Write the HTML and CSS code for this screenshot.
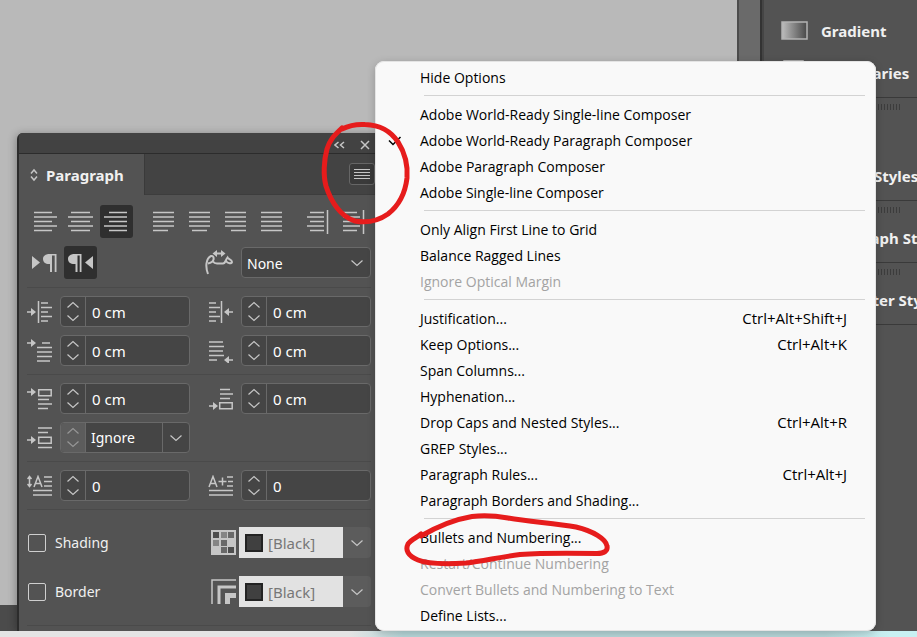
FILE: index.html
```html
<!DOCTYPE html>
<html lang="en">
<head>
    <meta charset="UTF-8">
    <meta name="viewport" content="width=device-width, initial-scale=1.0">
    <title>Paragraph Panel</title>
    <link rel="stylesheet" href="styles.css">
</head>
<body>
    <!-- Shared icons -->
    <svg class="symbols" aria-hidden="true">
        <symbol id="up" viewBox="0 0 14 8"><path d="M1.5 6.5 7 1.5l5.5 5"/></symbol>
        <symbol id="down" viewBox="0 0 14 8"><path d="M1.5 1.5 7 6.5l5.5-5"/></symbol>
    </svg>

    <!-- Workspace -->
    <div class="workspace">
        <main class="canvas">
            <div class="page-area"></div>
            <div class="status-bar"></div>
        </main>
        <div class="scroll-track"></div>
        <aside class="dock">
            <div class="dock-group first">
                <a class="dock-item" href="#">
                    <svg width="27" height="20" viewBox="0 0 27 20">
                        <defs><linearGradient id="grad"><stop offset="0" stop-color="#bdbdbd"/><stop offset="1" stop-color="#484848"/></linearGradient></defs>
                        <rect x="1" y="1" width="25" height="17" fill="url(#grad)" stroke="#b4b4b4" stroke-width="1.5"/>
                    </svg>
                    Gradient
                </a>
                <a class="dock-item" href="#">
                    <svg width="27" height="26" viewBox="0 0 27 26"><path d="M3 1h19v24H3z" fill="#8c8c8c"/></svg>
                    CC Libraries
                </a>
            </div>
            <div class="dock-group tall">
                <div class="grip"></div>
                <a class="dock-item" href="#"><span class="dock-icon"></span>Object Styles</a>
            </div>
            <div class="dock-group">
                <div class="grip"></div>
                <a class="dock-item" href="#"><span class="dock-icon"></span>Paragraph Styles</a>
            </div>
            <div class="dock-group">
                <div class="grip"></div>
                <a class="dock-item" href="#"><span class="dock-icon"></span>Character Styles</a>
            </div>
        </aside>
    </div>
    <div class="desktop"></div>

    <!-- Paragraph panel -->
    <section class="panel">
        <div class="panel-title">
            <button aria-label="Collapse"><svg width="11" height="8" viewBox="0 0 11 8"><path d="M4.5 1 1 4l3.500 3M10 1 6.500 4 10 7"/></svg></button>
            <button aria-label="Close"><svg width="10" height="10" viewBox="0 0 10 10"><path d="m1 1 8 8M9 1 1 9"/></svg></button>
        </div>
        <div class="tabs">
            <button class="tab"><svg width="8" height="14" viewBox="0 0 8 14"><path d="M1 5.500 4 2l3 3.500M1 8.500 4 12l3-3.500"/></svg>Paragraph</button>
            <button class="flyout" aria-label="Panel menu"><svg width="16" height="12" viewBox="0 0 16 12"><path d="M0 1.500h16M0 4.500h16M0 7.500h16M0 10.500h16"/></svg></button>
        </div>

        <div class="panel-body">
            <div class="align-row">
                <div class="group">
                    <button class="tool" aria-label="Align left"><svg width="25" height="22" viewBox="0 0 25 22"><path d="M2 1.500h18M2 6h23M2 10.500h18M2 15h23M2 19.500h18"/></svg></button>
                    <button class="tool" aria-label="Align center"><svg width="25" height="22" viewBox="0 0 25 22"><path d="M3 1.500h19M0 6h25M3 10.500h19M0 15h25M3 19.500h19"/></svg></button>
                    <button class="tool active" aria-label="Align right"><svg width="25" height="22" viewBox="0 0 25 22"><path d="M5 1.500h18M0 6h23M5 10.500h18M0 15h23M5 19.500h18"/></svg></button>
                </div>
                <div class="group">
                    <button class="tool" aria-label="Justify last left"><svg width="25" height="22" viewBox="0 0 25 22"><path d="M2 1.500h21M2 6h21M2 10.500h21M2 15h21M2 19.500h15"/></svg></button>
                    <button class="tool" aria-label="Justify last centered"><svg width="25" height="22" viewBox="0 0 25 22"><path d="M2 1.500h21M2 6h21M2 10.500h21M2 15h21M5 19.500h15"/></svg></button>
                    <button class="tool" aria-label="Justify last right"><svg width="25" height="22" viewBox="0 0 25 22"><path d="M2 1.500h21M2 6h21M2 10.500h21M2 15h21M8 19.500h15"/></svg></button>
                    <button class="tool" aria-label="Justify all"><svg width="25" height="22" viewBox="0 0 25 22"><path d="M2 1.500h21M2 6h21M2 10.500h21M2 15h21M2 19.500h21"/></svg></button>
                </div>
                <div class="group">
                    <button class="tool" aria-label="Align towards spine"><svg width="25" height="24" viewBox="0 0 25 24"><path d="M4 2.500h14M1 7h17M4 11.500h14M1 16h17M4 20.500h14M21.500 0v24"/></svg></button>
                    <button class="tool" aria-label="Align away from spine"><svg width="25" height="24" viewBox="0 0 25 24"><path d="M1 2.500h14M1 7h17M1 11.500h14M1 16h17M1 20.500h14M21.500 0v24"/></svg></button>
                </div>
            </div>

            <div class="row direction">
                <div class="group">
                    <button class="tool" aria-label="Left to right"><svg class="solid" width="25" height="20" viewBox="0 0 25 20"><path d="M0 3v13l8-6.500zM24.500 1v18H22.700V2.500H20V19H18V11C14 11.500 11 9.500 11 6s3-5 7-5z"/></svg></button>
                    <button class="tool active" aria-label="Right to left"><svg class="solid" width="25" height="20" viewBox="0 0 25 20"><path d="M25 3v13l-8-6.500zM13.500 1v18H11.700V2.500H9.500V19H7.500V11C3 11.500 0 9.500 0 6s3-5 7-5z"/></svg></button>
                </div>
                <div class="pair">
                    <label for="kashida"><svg width="28" height="26" viewBox="0 0 28 26"><path d="M3 24C1.500 20 1 17 1.500 13.500 2 10 3.500 7 6 6c2-.5 3 1.500 2.500 3.500S6 13 3 13.500M8 11.500c1 1.500 2 2 4 2h6c2.500 0 2.500-3.500 4.500-6 .5 1.500 4.500 2 4.500 4.500 0 2-4.500 1.500-6-1" stroke-width="2"/><path class="fill" d="M7.500 3.500 12 0v2.500h4V0l4.500 3.500L16 7V4.500h-4V7z"/></svg></label>
                    <div class="select-box">
                        <select id="kashida"><option>None</option></select>
                        <svg class="chevron"><use href="#down"/></svg>
                    </div>
                </div>
            </div>

            <hr>
            <div class="row">
                <div class="pair">
                    <label for="left-indent"><svg width="25" height="24" viewBox="0 0 25 24"><path d="M0 12h7M11.500 1v22M14 3h7M14 7.500h11M14 12h7M14 16.500h11M14 21h7"/><path class="fill" d="M4 8v8l5-4z"/></svg></label>
                    <div class="field">
                        <div class="stepper"><button aria-label="Increase"><svg><use href="#up"/></svg></button><button aria-label="Decrease"><svg><use href="#down"/></svg></button></div>
                        <input id="left-indent" type="text" value="0 cm">
                    </div>
                </div>
                <div class="pair">
                    <label for="right-indent"><svg width="25" height="24" viewBox="0 0 25 24"><path d="M18 12h7M13.500 1v22M1 3h7M1 7.500h11M1 12h7M1 16.500h11M1 21h7"/><path class="fill" d="M21 8v8l-5-4z"/></svg></label>
                    <div class="field">
                        <div class="stepper"><button aria-label="Increase"><svg><use href="#up"/></svg></button><button aria-label="Decrease"><svg><use href="#down"/></svg></button></div>
                        <input id="right-indent" type="text" value="0 cm">
                    </div>
                </div>
            </div>
            <div class="row">
                <div class="pair">
                    <label for="first-indent"><svg width="25" height="24" viewBox="0 0 25 24"><path d="M0 4h7M15 4h8M10 8.500h15M10 13h15M10 17.500h15M10 22h13"/><path class="fill" d="M4 0v8l5-4z"/></svg></label>
                    <div class="field">
                        <div class="stepper"><button aria-label="Increase"><svg><use href="#up"/></svg></button><button aria-label="Decrease"><svg><use href="#down"/></svg></button></div>
                        <input id="first-indent" type="text" value="0 cm">
                    </div>
                </div>
                <div class="pair">
                    <label for="last-indent"><svg width="25" height="24" viewBox="0 0 25 24"><path d="M1 3h14M1 7.500h15M1 12h14M1 16.500h15M1 21h8M18 21h7"/><path class="fill" d="M21 17v8l-5-4z"/></svg></label>
                    <div class="field">
                        <div class="stepper"><button aria-label="Increase"><svg><use href="#up"/></svg></button><button aria-label="Decrease"><svg><use href="#down"/></svg></button></div>
                        <input id="last-indent" type="text" value="0 cm">
                    </div>
                </div>
            </div>

            <hr>
            <div class="row">
                <div class="pair">
                    <label for="space-before"><svg width="25" height="24" viewBox="0 0 25 24"><path d="M0 5h7M11.700 2.700h12.500v6H11.700zM11 12.500h11M11 17h14M11 21.500h10"/><path class="fill" d="M4 1v8l5-4z"/></svg></label>
                    <div class="field">
                        <div class="stepper"><button aria-label="Increase"><svg><use href="#up"/></svg></button><button aria-label="Decrease"><svg><use href="#down"/></svg></button></div>
                        <input id="space-before" type="text" value="0 cm">
                    </div>
                </div>
                <div class="pair">
                    <label for="space-after"><svg width="25" height="24" viewBox="0 0 25 24"><path d="M1 19h7M11.700 15.700h12.500v6H11.700zM12 2.500h10M12 7h13M12 11.500h10"/><path class="fill" d="M5 15v8l5-4z"/></svg></label>
                    <div class="field">
                        <div class="stepper"><button aria-label="Increase"><svg><use href="#up"/></svg></button><button aria-label="Decrease"><svg><use href="#down"/></svg></button></div>
                        <input id="space-after" type="text" value="0 cm">
                    </div>
                </div>
            </div>
            <div class="row">
                <div class="pair">
                    <label for="space-between"><svg width="25" height="24" viewBox="0 0 25 24"><path d="M0 14h7M11.700 11.200h12.500v6H11.700zM11 2h14M11 6.500h10M11 21.500h14"/><path class="fill" d="M4 10v8l5-4z"/></svg></label>
                    <div class="field">
                        <div class="stepper disabled"><button aria-label="Increase" disabled><svg><use href="#up"/></svg></button><button aria-label="Decrease" disabled><svg><use href="#down"/></svg></button></div>
                        <input id="space-between" class="combo" type="text" value="Ignore">
                        <button class="drop" aria-label="Choose"><svg><use href="#down"/></svg></button>
                    </div>
                </div>
            </div>

            <hr>
            <div class="row">
                <div class="pair">
                    <label for="drop-lines"><svg width="25" height="22" viewBox="0 0 25 22"><path d="M2.500 2v9M.5 4l2-2.500 2 2.500M.5 9l2 2.500 2-2.500M7 12l4-10.500L15 12M8.500 8.500h5M17 2h8M17 6.500h8M17 11h8M6 15.500h19M6 20h19"/></svg></label>
                    <div class="field">
                        <div class="stepper"><button aria-label="Increase"><svg><use href="#up"/></svg></button><button aria-label="Decrease"><svg><use href="#down"/></svg></button></div>
                        <input id="drop-lines" type="text" value="0">
                    </div>
                </div>
                <div class="pair">
                    <label for="drop-chars"><svg width="25" height="22" viewBox="0 0 25 22"><path d="M1 12 5 1.500 9 12M2.500 8.500h5M10.500 6.500h8M14.500 2.500v8M19 2h6M20 6.500h5M19 11h6M1 15.500h24M1 20h24"/></svg></label>
                    <div class="field">
                        <div class="stepper"><button aria-label="Increase"><svg><use href="#up"/></svg></button><button aria-label="Decrease"><svg><use href="#down"/></svg></button></div>
                        <input id="drop-chars" type="text" value="0">
                    </div>
                </div>
            </div>

            <hr>
            <div class="row paint">
                <label class="check"><input type="checkbox">Shading</label>
                <div class="pair">
                    <label for="shade-color"><svg class="solid" width="25" height="25" viewBox="0 0 25 25"><path d="M0 0h25v25H0z"/><path fill="#4e4e4e" d="M2 2h6v6H2zM17 17h6v6h-6z"/><path fill="#858585" d="M10 2h6v6h-6zM2 10h6v6H2z"/><path fill="#696969" d="M17 2h6v6h-6zM10 10h6v6h-6zM10 17h6v6h-6z"/></svg></label>
                    <div class="swatch-box">
                        <span class="swatch"></span>
                        <select id="shade-color"><option>[Black]</option></select>
                        <svg class="chevron"><use href="#down"/></svg>
                    </div>
                </div>
            </div>
            <div class="row paint">
                <label class="check"><input type="checkbox">Border</label>
                <div class="pair">
                    <label for="border-color"><svg width="25" height="25" viewBox="0 0 25 25"><path d="M1 25V1h24"/><path stroke-width="3" d="M8 25V8h17"/><path stroke-width="5" d="M16.500 25v-8.500H25"/></svg></label>
                    <div class="swatch-box">
                        <span class="swatch"></span>
                        <select id="border-color"><option>[Black]</option></select>
                        <svg class="chevron"><use href="#down"/></svg>
                    </div>
                </div>
            </div>
            <hr>
        </div>
    </section>

    <!-- Panel menu -->
    <nav class="menu">
        <button>Hide Options</button>
        <hr>
        <button>Adobe World-Ready Single-line Composer</button>
        <button><svg class="tick" width="14" height="10" viewBox="0 0 14 10"><path d="M1 4.500 5 8.500 12.500 1"/></svg>Adobe World-Ready Paragraph Composer</button>
        <button>Adobe Paragraph Composer</button>
        <button>Adobe Single-line Composer</button>
        <hr>
        <button>Only Align First Line to Grid</button>
        <button>Balance Ragged Lines</button>
        <button disabled>Ignore Optical Margin</button>
        <hr>
        <button>Justification...<kbd>Ctrl+Alt+Shift+J</kbd></button>
        <button>Keep Options...<kbd>Ctrl+Alt+K</kbd></button>
        <button>Span Columns...</button>
        <button>Hyphenation...</button>
        <button>Drop Caps and Nested Styles...<kbd>Ctrl+Alt+R</kbd></button>
        <button>GREP Styles...</button>
        <button>Paragraph Rules...<kbd>Ctrl+Alt+J</kbd></button>
        <button>Paragraph Borders and Shading...</button>
        <hr>
        <button>Bullets and Numbering...</button>
        <button disabled>Restart/Continue Numbering</button>
        <button disabled>Convert Bullets and Numbering to Text</button>
        <button>Define Lists...</button>
    </nav>

    <!-- Red pen marks -->
    <svg class="marks" width="917" height="637" viewBox="0 0 917 637" aria-hidden="true">
        <path d="M342 129C350 125 357 124 365 124.500C380 125 390 130 398 142C405 153 408 165 407 178C405 195 397 207 388 214C378 221 366 223 355 221C341 217 331 202 326 186C323 175 324 160 327 149C330 139 335 135 342 128"/>
        <path d="M421 536C440 525 457 519 472 516.500C483 515 497 516 508 518C530 522 555 523 576 527C593 531 606 539 607 546C608 551 604 553.500 597 553.500C570 553 540 553 520 554.500C500 557 483 561 466 563C450 564 430 565 418 560C408 556 405 550 408 544C411 540 416 538 421 534"/>
    </svg>
</body>
</html>
```
FILE: styles.css
```css
/* Reset default styles */
* {
    margin: 0;
    padding: 0;
    box-sizing: border-box;
}

body {
    font-family: "Noto Sans", "Open Sans", sans-serif;
    font-size: 14px;
    color: #f0f0f0;
    height: 100vh;
    display: flex;
    flex-direction: column;
    position: relative;
    overflow: hidden;
}

button, input, select {
    font: inherit;
    color: inherit;
    border: none;
    background: none;
    outline: none;
}

svg {
    display: block;
    flex: none;
    fill: none;
    stroke: #c6c6c6;
    stroke-width: 1.5;
}

svg.solid, .fill {
    fill: #c6c6c6;
    stroke: none;
}

hr {
    border: none;
}

.symbols {
    position: absolute;
    width: 0;
    height: 0;
}

/* Workspace */
.workspace {
    flex: 1;
    display: flex;
}

.canvas {
    flex: 1;
    display: flex;
    flex-direction: column;
}

.page-area {
    flex: 1;
    background: #b9b9b9;
}

.status-bar {
    height: 26px;
    background: #4b4b4b;
}

.scroll-track {
    width: 25px;
    background: #6a6a6a;
    border-left: 2px solid #4c4c4c;
    border-right: 2px solid #333;
}

.desktop {
    height: 6px;
    background: linear-gradient(90deg, #e4e4e4 38%, #b5d6d8 44%, #b5d6d8 90%, #c8f0f2 97%);
}

/* Dock */
.dock {
    width: 155px;
    background: #535353;
    border-left: 2px solid #454545;
    overflow: hidden;
}

.dock-group {
    padding: 6px 0 3px;
    border-bottom: 1px solid #3a3a3a;
}

.dock-group.first {
    padding-top: 10px;
}

.dock-group.tall .grip {
    margin-bottom: 45px;
}

.dock-item {
    display: flex;
    align-items: center;
    gap: 13px;
    height: 42px;
    padding-left: 17px;
    color: #f0f0f0;
    font-size: 15px;
    font-weight: bold;
    text-decoration: none;
    white-space: nowrap;
}

.dock-icon {
    flex: none;
    width: 27px;
}

.grip {
    height: 6px;
    margin: 0 15px 4px 60px;
    background: repeating-linear-gradient(90deg, #3c3c3c 0 1px, transparent 1px 3px);
}

/* Paragraph panel */
.panel {
    position: absolute;
    left: 17px;
    top: 133px;
    width: 360px;
    background: #535353;
    border-left: 2px solid #2c2c2c;
    border-radius: 6px 0 0 0;
    box-shadow: -1px 1px 8px rgba(0, 0, 0, 0.3);
    clip-path: inset(-10px 0 0 -10px);
}

.panel-title {
    height: 21px;
    display: flex;
    justify-content: flex-end;
    align-items: center;
    gap: 15px;
    padding: 3px 7px 0 0;
    background: #424242;
    border-bottom: 1px solid #2c2c2c;
    border-radius: 4px 0 0 0;
}

.tabs {
    height: 41px;
    display: flex;
    justify-content: space-between;
    align-items: center;
    background: #434343;
    border-bottom: 1px solid #3d3d3d;
}

.tab {
    width: 126px;
    height: 41px;
    display: flex;
    align-items: center;
    gap: 8px;
    padding-left: 11px;
    align-self: flex-start;
    background: #535353;
    border-right: 1px solid #3a3a3a;
    font-size: 15px;
    font-weight: bold;
}

.flyout {
    width: 26px;
    height: 22px;
    padding-left: 4px;
    margin-right: 2px;
    border: 1px solid #666;
    border-radius: 3px;
    background: #3a3a3a;
}

.flyout svg {
    stroke-width: 1;
}

.panel-body {
    padding: 10px 6px 5px 8px;
}

.panel-body hr {
    height: 1px;
    margin-bottom: 8px;
    background: #4a4a4a;
}

.panel-body hr:last-child {
    margin-bottom: 0;
}

.align-row {
    display: flex;
    justify-content: space-between;
    padding-left: 1px;
    margin-bottom: 8px;
}

.group {
    display: flex;
    gap: 3px;
}

.tool {
    width: 33px;
    height: 33px;
    display: flex;
    justify-content: center;
    align-items: center;
    border-radius: 3px;
}

.tool.active {
    background: #2f2f2f;
}

.row {
    display: grid;
    grid-template-columns: repeat(2, minmax(0, 1fr));
    column-gap: 18px;
    align-items: center;
    margin-bottom: 8px;
}

.direction .group {
    padding-left: 1px;
}

.direction label {
    margin-left: -3px;
}

.pair {
    display: flex;
    align-items: center;
    gap: 8px;
}

.field, .select-box {
    flex: 1;
    min-width: 0;
    height: 31px;
    display: flex;
    background: #454545;
    border: 1px solid #696969;
    border-radius: 4px;
    color: #fff;
    overflow: hidden;
}

.stepper {
    width: 25px;
    display: flex;
    flex-direction: column;
    justify-content: space-evenly;
    align-items: center;
    border-right: 1px solid #696969;
}

.stepper button, .drop {
    display: flex;
    justify-content: center;
    align-items: center;
}

.stepper svg, .drop svg, .chevron {
    width: 14px;
    height: 8px;
    stroke-width: 1.2;
}

.stepper.disabled {
    background: #5c5c5c;
}

.stepper.disabled svg {
    stroke: #969696;
}

.field input {
    flex: 1;
    min-width: 0;
    padding-left: 6px;
    font-size: 15px;
}

.field .combo {
    padding-left: 5px;
    font-size: 14px;
}

.drop {
    width: 27px;
    border-left: 1px solid #696969;
}

/* Drop-downs */
.select-box, .swatch-box {
    align-items: center;
}

select {
    flex: 1;
    min-width: 0;
    height: 100%;
    appearance: none;
}

.select-box select {
    padding: 2px 0 0 5px;
}

.select-box .chevron {
    margin-right: 6px;
}

.swatch-box {
    flex: 1;
    min-width: 0;
    height: 31px;
    display: flex;
    margin-left: -2px;
    padding-right: 7px;
    background: linear-gradient(90deg, #e2e2e2 104px, #5c5c5c 104px);
    border-radius: 0 4px 4px 0;
    color: #777;
    font-size: 15px;
}

.swatch {
    width: 18px;
    height: 18px;
    margin: 0 5px 0 6px;
    background: #404040;
    border: 2px solid #232323;
}

.row.paint {
    margin: 17px 0 18px;
}

.paint label svg {
    margin: 0 -3px 0 3px;
}

.check {
    display: flex;
    align-items: center;
    gap: 9px;
    padding-left: 1px;
}

.check input {
    appearance: none;
    width: 18px;
    height: 18px;
    border: 1px solid #cfcfcf;
    border-radius: 2px;
}

/* Panel menu */
.menu {
    position: absolute;
    left: 375px;
    top: 61px;
    width: 501px;
    padding: 4px 0 2px;
    background: #f9f9f9;
    border-radius: 9px;
    box-shadow: inset 0 0 0 1px #e4e4e4, 0 2px 8px rgba(0, 0, 0, 0.2);
    color: #000;
    font-family: "Open Sans", "Noto Sans", sans-serif;
}

.menu button {
    position: relative;
    display: flex;
    justify-content: space-between;
    align-items: center;
    width: 100%;
    height: 26px;
    padding: 0 29px 2px 45px;
}

.menu button:disabled {
    color: #a3a3a3;
}

.menu kbd {
    font-family: inherit;
    font-size: 15px;
}

.menu hr {
    height: 1px;
    margin: 4px 11px 6px 49px;
    background: #d3d3d3;
}

.menu .tick {
    position: absolute;
    left: 13px;
    top: 8px;
    stroke: #000;
}

/* Red pen marks */
.marks {
    position: absolute;
    left: 0;
    top: 0;
    pointer-events: none;
    stroke: #e61c1c;
    stroke-width: 5;
    stroke-linecap: round;
    stroke-linejoin: round;
}
```
